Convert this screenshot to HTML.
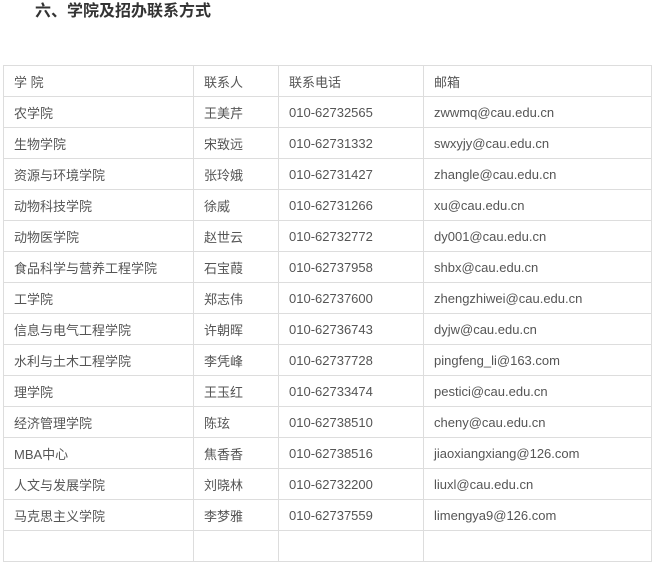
<!DOCTYPE html>
<html><head><meta charset="utf-8"><style>
body{margin:0;background:#fff;font-family:"Liberation Sans","Noto Sans CJK SC",sans-serif;overflow:hidden;width:657px;height:533px}
h2{position:absolute;left:35px;top:0;margin:0;font-size:16px;line-height:24px;font-weight:bold;color:#333}
table{position:absolute;left:3px;top:65px;border-collapse:collapse;width:649px;table-layout:fixed}
td{border:1px solid #ddd;height:30px;padding:0 0 0 10px;font-size:13px;color:#555;white-space:nowrap}
</style></head><body>
<h2>六、学院及招办联系方式</h2>
<table>
<colgroup><col style="width:190px"><col style="width:85px"><col style="width:145px"><col></colgroup>
<tr><td>学 院</td><td>联系人</td><td>联系电话</td><td>邮箱</td></tr>
<tr><td>农学院</td><td>王美芹</td><td>010-62732565</td><td>zwwmq@cau.edu.cn</td></tr>
<tr><td>生物学院</td><td>宋致远</td><td>010-62731332</td><td>swxyjy@cau.edu.cn</td></tr>
<tr><td>资源与环境学院</td><td>张玲娥</td><td>010-62731427</td><td>zhangle@cau.edu.cn</td></tr>
<tr><td>动物科技学院</td><td>徐威</td><td>010-62731266</td><td>xu@cau.edu.cn</td></tr>
<tr><td>动物医学院</td><td>赵世云</td><td>010-62732772</td><td>dy001@cau.edu.cn</td></tr>
<tr><td>食品科学与营养工程学院</td><td>石宝葭</td><td>010-62737958</td><td>shbx@cau.edu.cn</td></tr>
<tr><td>工学院</td><td>郑志伟</td><td>010-62737600</td><td>zhengzhiwei@cau.edu.cn</td></tr>
<tr><td>信息与电气工程学院</td><td>许朝晖</td><td>010-62736743</td><td>dyjw@cau.edu.cn</td></tr>
<tr><td>水利与土木工程学院</td><td>李凭峰</td><td>010-62737728</td><td>pingfeng_li@163.com</td></tr>
<tr><td>理学院</td><td>王玉红</td><td>010-62733474</td><td>pestici@cau.edu.cn</td></tr>
<tr><td>经济管理学院</td><td>陈玹</td><td>010-62738510</td><td>cheny@cau.edu.cn</td></tr>
<tr><td>MBA中心</td><td>焦香香</td><td>010-62738516</td><td>jiaoxiangxiang@126.com</td></tr>
<tr><td>人文与发展学院</td><td>刘晓林</td><td>010-62732200</td><td>liuxl@cau.edu.cn</td></tr>
<tr><td>马克思主义学院</td><td>李梦雅</td><td>010-62737559</td><td>limengya9@126.com</td></tr>
<tr><td></td><td></td><td></td><td></td></tr>
</table>
</body></html>
